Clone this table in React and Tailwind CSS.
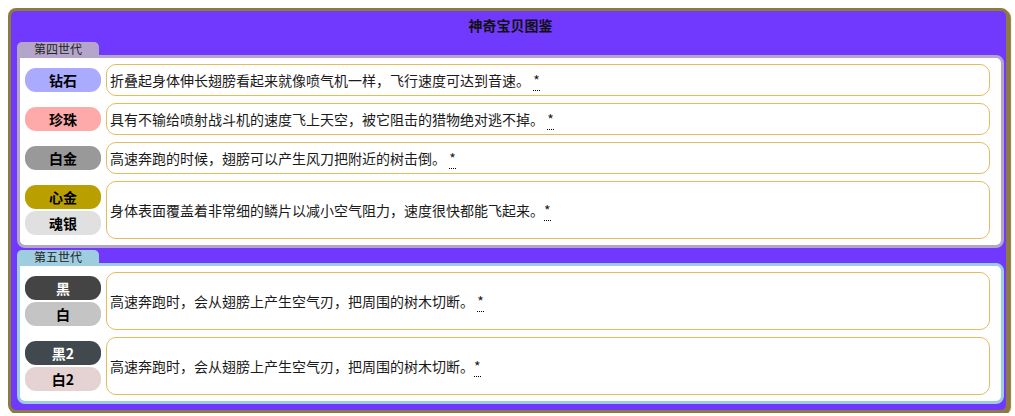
import React from 'react';

const generations = [
    {
        name: '第四世代',
        tab: 'bg-[#b4a5ca]',
        border: 'border-[#b4a5ca]',
        rows: [
            { pills: [{ name: '钻石', cls: 'bg-[#aaaaff] text-black' }], text: '折叠起身体伸长翅膀看起来就像喷气机一样，飞行速度可达到音速。 ' },
            { pills: [{ name: '珍珠', cls: 'bg-[#ffaaaa] text-black' }], text: '具有不输给喷射战斗机的速度飞上天空，被它阻击的猎物绝对逃不掉。 ' },
            { pills: [{ name: '白金', cls: 'bg-[#999999] text-black' }], text: '高速奔跑的时候，翅膀可以产生风刀把附近的树击倒。 ' },
            {
                pills: [
                    { name: '心金', cls: 'bg-[#b9a000] text-black' },
                    { name: '魂银', cls: 'bg-[#e0e0e0] text-black' },
                ],
                text: '身体表面覆盖着非常细的鳞片以减小空气阻力，速度很快都能飞起来。',
            },
        ],
    },
    {
        name: '第五世代',
        tab: 'bg-[#9fcde0]',
        border: 'border-[#9fcde0]',
        rows: [
            {
                pills: [
                    { name: '黑', cls: 'bg-[#444444] text-white' },
                    { name: '白', cls: 'bg-[#c4c4c4] text-black' },
                ],
                text: '高速奔跑时，会从翅膀上产生空气刃，把周围的树木切断。 ',
            },
            {
                pills: [
                    { name: '黑2', cls: 'bg-[#41494f] text-white' },
                    { name: '白2', cls: 'bg-[#e5d2d3] text-black' },
                ],
                text: '高速奔跑时，会从翅膀上产生空气刃，把周围的树木切断。',
            },
        ],
    },
];

function Row({ row }) {
    return (
        <div className="flex items-center gap-[5px]">
            <div className="flex flex-col gap-[2px] w-[76px] shrink-0">
                {row.pills.map((p, i) => (
                    <div
                        key={i}
                        className={`h-6 rounded-[11px] flex items-center justify-center font-bold text-[14px] ${p.cls}`}
                    >
                        {p.name}
                    </div>
                ))}
            </div>
            <div
                className={`flex-1 flex items-center border border-[#e2bd5d] rounded-[10px] px-[3px] text-[14px] text-[#1a1a1a] bg-white ${
                    row.pills.length > 1 ? 'h-[58px]' : 'h-8'
                }`}
            >
                <span className="whitespace-pre">
                    {row.text}
                    <abbr className="no-underline border-b border-dotted border-black" title="*">*</abbr>
                </span>
            </div>
        </div>
    );
}

export default function App() {
    return (
        <div
            className="ml-2 mt-2 w-[1001px] border-[3px] border-[#8d7a3e] rounded-[8px] bg-[#7039fd] shadow-[2px_2px_1px_#8d7a3e] pl-[6px] pr-[2px] pb-[6px]"
            style={{ fontFamily: '"Noto Sans CJK SC", "Noto Sans", sans-serif' }}
        >
            <div className="h-[28px] flex items-center justify-center font-bold text-[14px] text-[#111]">
                神奇宝贝图鉴
            </div>
            <div className="flex flex-col gap-[2px] mt-[3px]">
                {generations.map((g, gi) => (
                    <div key={gi}>
                        <div
                            className={`w-[82px] h-[13px] rounded-t-[5px] flex items-center justify-center text-[12px] leading-none text-[#222] ${g.tab}`}
                        >
                            {g.name}
                        </div>
                        <div
                            className={`border-[3px] ${g.border} rounded-[8px] rounded-tl-none bg-white pl-[5px] pr-[11px] py-[6px] flex flex-col gap-[7px]`}
                        >
                            {g.rows.map((r, ri) => (
                                <Row key={ri} row={r} />
                            ))}
                        </div>
                    </div>
                ))}
            </div>
        </div>
    );
}
